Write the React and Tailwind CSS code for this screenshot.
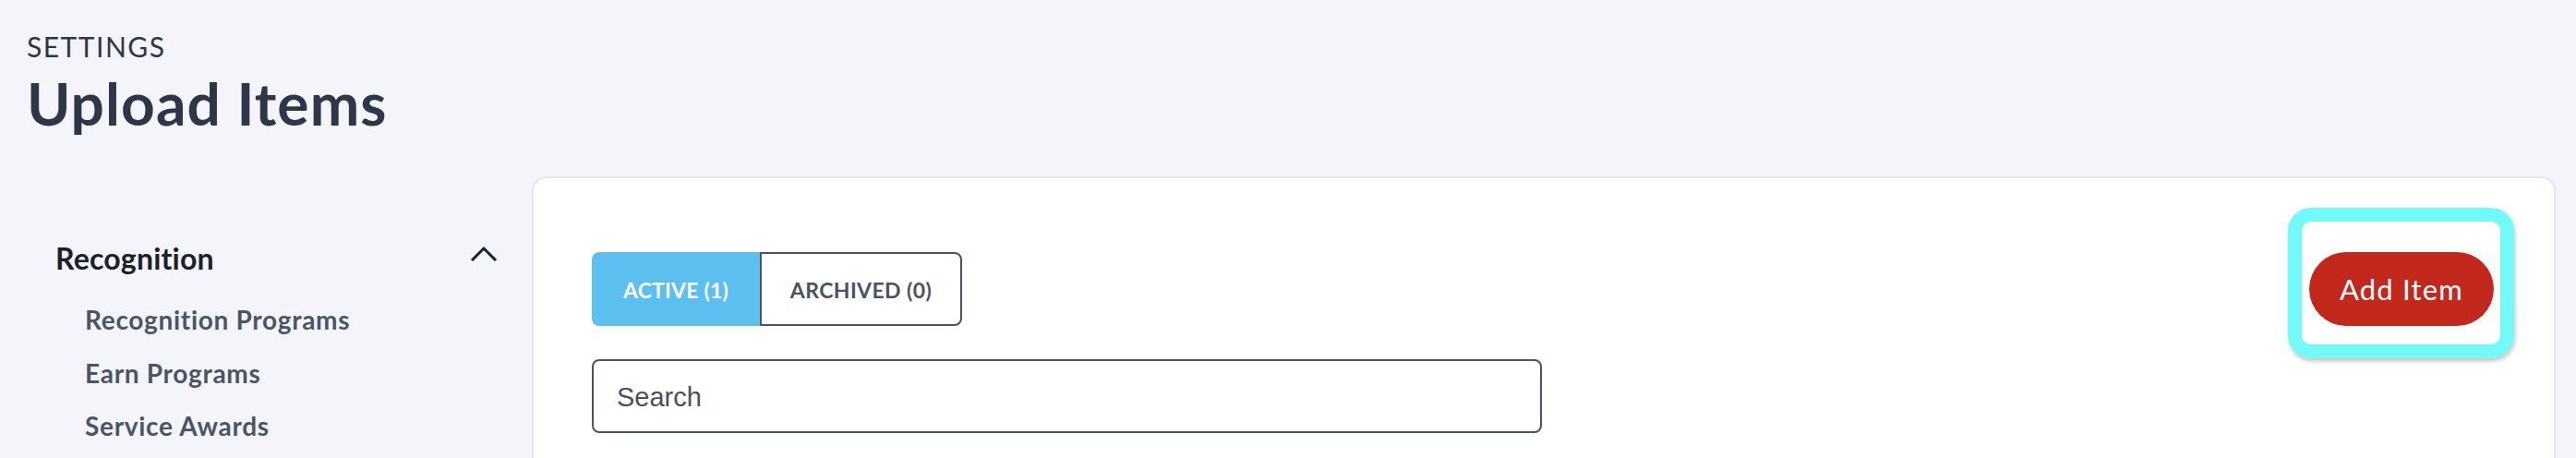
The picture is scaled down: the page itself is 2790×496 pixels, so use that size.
import React from 'react';

const font = { fontFamily: 'Lato, "Noto Sans", sans-serif' };

const subItems = ['Recognition Programs', 'Earn Programs', 'Service Awards'];

const Sidebar = () => (
  <aside className="w-[510px] shrink-0 pl-[31px] pt-[70px]">
    <div className="flex items-start justify-between">
      <span className="text-[32px] leading-[1.2] font-bold tracking-[0.2px] text-[#1a202c]">Recognition</span>
      <svg width="30" height="17" viewBox="0 0 30 17" fill="none" className="mt-[5px]">
        <path d="M2 16 L15 3 L28 16" stroke="#1a202c" strokeWidth="3" />
      </svg>
    </div>
    <ul className="mt-[31px] flex flex-col gap-[24px] pl-[32px]">
      {subItems.map((item) => (
        <li key={item} className="text-[28px] leading-[1.2] font-bold tracking-[0.7px] text-[#4a5568]">
          {item}
        </li>
      ))}
    </ul>
  </aside>
);

const App = () => {
  return (
    <div className="min-h-screen bg-[#f4f5fa] pl-[29px] pr-[22px] pt-[32px]" style={font}>
      {/* Encabezado */}
      <div className="text-[#2d3748]">
        <p className="text-[30px] leading-[1.2] font-normal tracking-[1.5px]">SETTINGS</p>
        <h1 className="mt-[6px] text-[64px] leading-[1.2] font-bold tracking-[1.1px]">Upload Items</h1>
      </div>

      <div className="mt-[40px] flex gap-[37px]">
        <Sidebar />

        {/* Tarjeta principal */}
        <div className="flex-1 rounded-[16px] border-2 border-[#e6e7ec] bg-white pl-[63px] pr-[65px] pt-[80px] pb-[80px]">
          <div className="flex items-start justify-between">
            <div>
              <div className="flex h-[80px]">
                <button className="flex w-[182px] items-center justify-center rounded-l-[8px] bg-[#5bc0ef] pt-[3px] text-[23px] font-bold tracking-[0.2px] text-white">
                  ACTIVE (1)
                </button>
                <button className="flex w-[219px] items-center justify-center rounded-r-[8px] border-2 border-[#4a5263] bg-white pt-[3px] text-[23px] font-bold tracking-[0.4px] text-[#4a5263]">
                  ARCHIVED (0)
                </button>
              </div>
              <div className="mt-[36px] flex h-[80px] w-[1029px] items-center rounded-[8px] border-2 border-[#4a5263] bg-white pl-[25px] pr-[22px] pt-[4px]">
                <input
                  type="text"
                  placeholder="Search"
                  className="w-full bg-transparent text-[29px] text-[#3f4550] placeholder-[#4a4f5a] outline-none"
                  style={{ fontFamily: '"Liberation Sans", Arial, sans-serif' }}
                />
              </div>
            </div>

            <div className="relative">
              <div className="absolute left-[-23px] top-[-48px] h-[163px] w-[245px] rounded-[25px] border-[15px] border-[#74f9f9] shadow-[1px_3px_5px_rgba(0,0,0,0.25)]" />
              <button className="relative flex h-[80px] w-[200px] items-center justify-center rounded-full bg-[#c3281c] text-[31px] font-normal tracking-[1.2px] text-white">
                Add Item
              </button>
            </div>
          </div>
        </div>
      </div>
    </div>
  );
};

export default App;
